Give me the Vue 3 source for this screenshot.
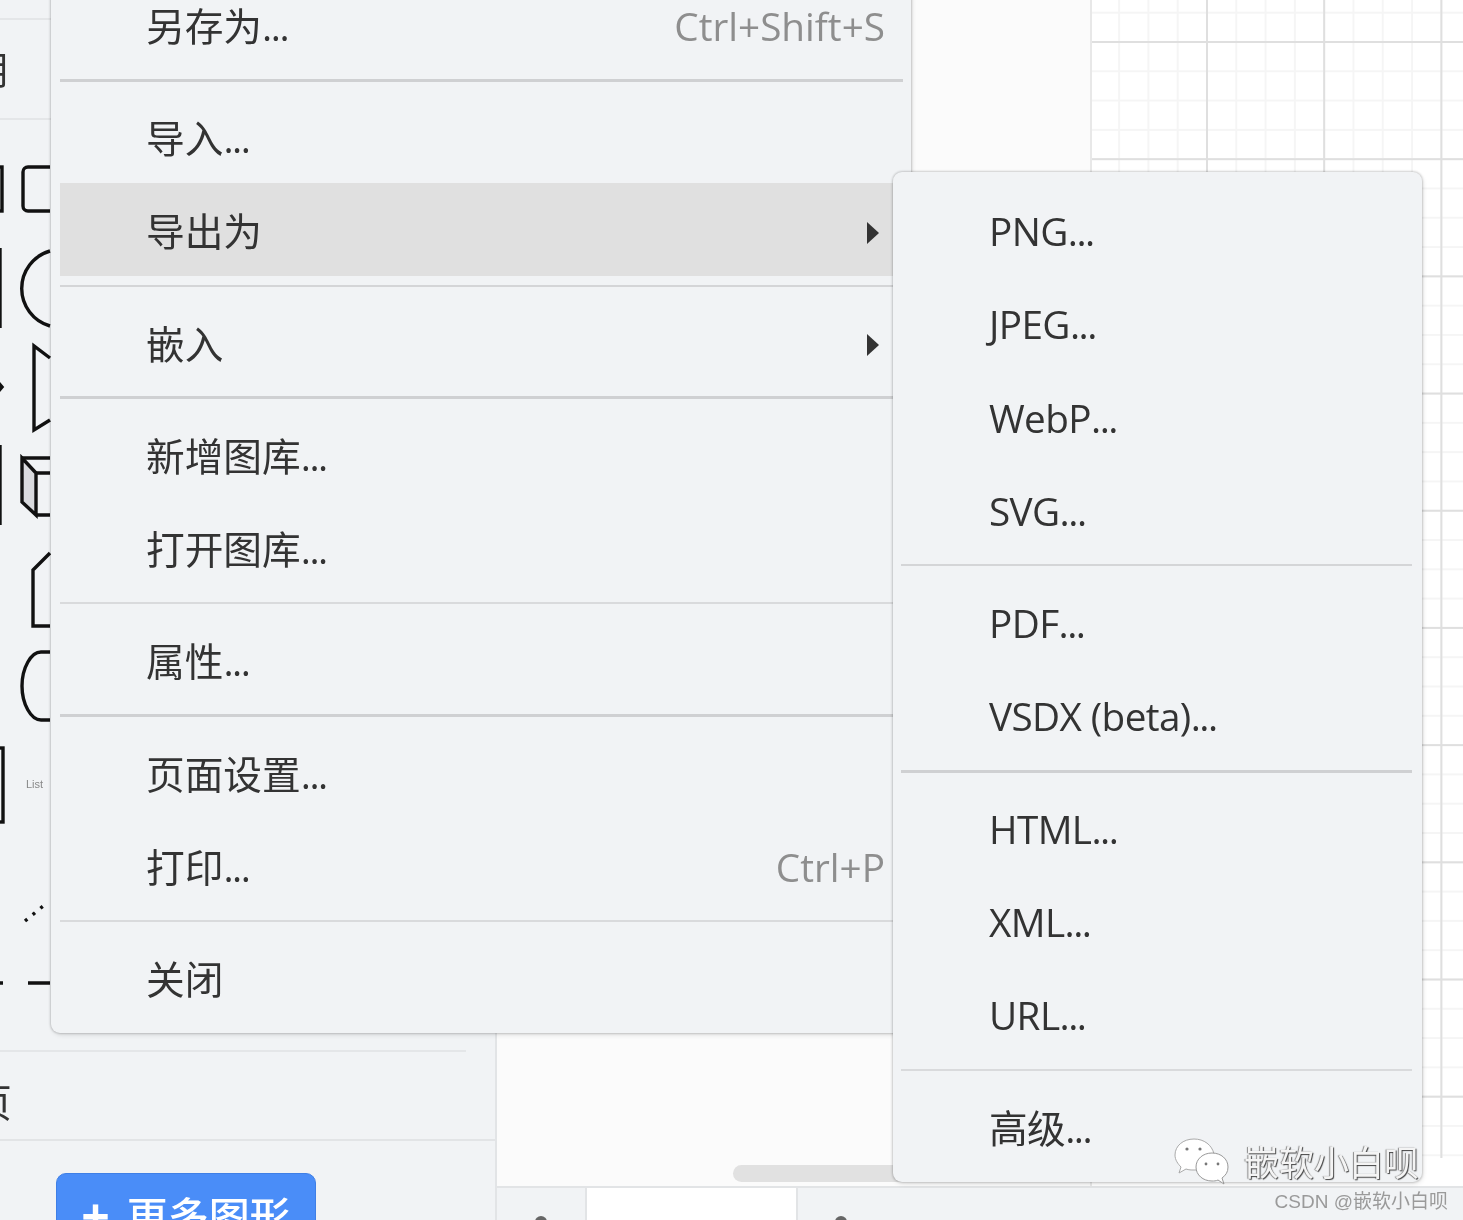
<script setup>
const fileItems = [
  { label: '另存为', dots: true, shortcut: 'Ctrl+Shift+S' },
  { sep: 'thick' },
  { label: '导入', dots: true },
  { label: '导出为', arrow: true, active: true },
  { sep: 'mid' },
  { label: '嵌入', arrow: true },
  { sep: 'thick' },
  { label: '新增图库', dots: true },
  { label: '打开图库', dots: true },
  { sep: 'thin' },
  { label: '属性', dots: true },
  { sep: 'thick' },
  { label: '页面设置', dots: true },
  { label: '打印', dots: true, shortcut: 'Ctrl+P' },
  { sep: 'thin' },
  { label: '关闭' }
]
const exportItems = [
  { label: 'PNG', dots: true },
  { label: 'JPEG', dots: true },
  { label: 'WebP', dots: true },
  { label: 'SVG', dots: true },
  { sep: 'mid' },
  { label: 'PDF', dots: true },
  { label: 'VSDX (beta)', dots: true },
  { sep: 'thick' },
  { label: 'HTML', dots: true },
  { label: 'XML', dots: true },
  { label: 'URL', dots: true },
  { sep: 'thin' },
  { label: '高级', dots: true }
]
</script>

<template>
  <div class="app">
    <aside class="sidebar">
      <div class="side-head"><span class="clipped">通用</span></div>
      <svg class="shapes" width="495" height="930" viewBox="0 120 495 930" fill="none" stroke="#111" stroke-width="3.4">
        <rect x="-20" y="167" width="22" height="44" />
        <path d="M50 167H28a5 5 0 0 0-5 5v34a5 5 0 0 0 5 5h22" />
        <path d="M0 248v80" />
        <path d="M50 251a39 39 0 0 0 0 75" />
        <path d="M-4 380l6 7-6 7" fill="#111" />
        <path d="M50 358l-16-12v84l16-10" />
        <path d="M0 445v80" />
        <path d="M22 458l14 15v42l-14-13z" fill="#d9dade" />
        <path d="M50 458H22M36 473h14M36 515h14" />
        <path d="M50 553L33 570v56h17" />
        <path d="M50 652H41c-10 0-19 16-19 34s9 34 19 34h9" />
        <rect x="-20" y="748" width="23" height="74" />
        <text x="26" y="788" class="list-label" stroke="none">List</text>
        <path d="M25 921l23-19" stroke-dasharray="3 7" />
        <path d="M-6 983h9M28 983h22" />
      </svg>
      <div class="side-rule"></div>
      <div class="side-foot"><span class="clipped page-label">草稿页</span></div>
      <div class="more-wrap">
        <button class="more-btn"><span class="plus">+</span>更多图形</button>
      </div>
    </aside>

    <div class="right">
      <main class="stage">
        <div class="gutter"></div>
        <div class="canvas-col">
          <div class="grid"></div>
        </div>
        <div class="thumb"></div>
      </main>
      <footer class="tabbar">
        <div class="tab-icon"><i></i></div>
        <div class="tab"></div>
        <div class="tab-icon"><i></i></div>
      </footer>
    </div>

    <div class="menu file-menu">
      <template v-for="(item, i) in fileItems" :key="i">
        <div v-if="item.sep" class="sep"><hr :class="item.sep" /></div>
        <div v-else class="row" :class="{ active: item.active }">
          <span>{{ item.label }}<span v-if="item.dots" class="dots">...</span></span>
          <span v-if="item.shortcut" class="shortcut">{{ item.shortcut }}</span>
          <svg v-if="item.arrow" class="arrow" width="14" height="24" viewBox="0 0 14 24"><path d="M1 1l12 11L1 23z" fill="#333" /></svg>
        </div>
      </template>
    </div>

    <div class="menu export-menu">
      <template v-for="(item, i) in exportItems" :key="i">
        <div v-if="item.sep" class="sep"><hr :class="item.sep" /></div>
        <div v-else class="row"><span>{{ item.label }}<span v-if="item.dots" class="dots">...</span></span></div>
      </template>
    </div>

    <div class="watermark">
      <svg width="56" height="48" viewBox="0 0 56 48">
        <path d="M20 1C9 1 1 8 1 17c0 5 3 9 6 12l-2 6 7-4c3 1 5 1 8 1h3c-1-9 6-17 17-16-2-9-10-15-20-15z" fill="#fff" stroke="#aaa" stroke-width="1" />
        <path d="M38 15c-9 0-16 6-16 14s7 14 16 14c2 0 4 0 6-1l6 4-2-6c4-3 6-6 6-11 0-8-7-14-16-14z" fill="#fff" stroke="#999" stroke-width="1" />
        <circle cx="13" cy="11" r="1.6" fill="#777" /><circle cx="26" cy="11" r="1.6" fill="#777" />
        <circle cx="32" cy="26" r="1.4" fill="#777" /><circle cx="44" cy="26" r="1.4" fill="#777" />
      </svg>
      <span class="wm-text">嵌软小白呗</span>
    </div>
    <div class="csdn">CSDN @嵌软小白呗</div>
  </div>
</template>

<style scoped>
.app {
  position: relative;
  width: 1463px;
  height: 1220px;
  overflow: hidden;
  display: flex;
  background: #fbfbfb;
  font-family: "Open Sans", "Noto Sans CJK SC", sans-serif;
  color: #333;
  filter: blur(0.6px);
}
.sidebar {
  flex: 0 0 497px;
  height: 1220px;
  display: flex;
  flex-direction: column;
  background: #f1f3f5;
  border-right: 2px solid #e2e4e6;
  box-sizing: border-box;
  overflow: hidden;
}
.side-head {
  flex: 0 0 102px;
  box-sizing: border-box;
  margin-top: 18px;
  border-top: 2px solid #e4e6e8;
  border-bottom: 2px solid #e4e6e8;
  display: flex;
  align-items: center;
  font-size: 38.7px;
  line-height: 1;
}
.clipped {
  margin-left: -68px;
  white-space: nowrap;
}
.shapes {
  flex: 0 0 930px;
  display: block;
}
.list-label {
  font: 11px "Liberation Sans", sans-serif;
  fill: #888;
}
.side-rule {
  flex: 0 0 2px;
  width: 466px;
  background: #e4e6e8;
}
.side-foot {
  flex: 0 0 89px;
  box-sizing: border-box;
  padding-top: 8px;
  border-bottom: 2px solid #e2e4e6;
  display: flex;
  align-items: center;
  font-size: 38.7px;
}
.page-label {
  margin-left: -104px;
}
.more-wrap {
  flex: none;
  padding: 32px 0 0 56px;
}
.more-btn {
  width: 260px;
  height: 90px;
  border: 1px solid #3f7fe6;
  border-radius: 10px;
  background: #4a8df8;
  color: #fff;
  font: 500 41px "Open Sans", "Noto Sans CJK SC", sans-serif;
  padding: 14px 0 0;
  display: flex;
  justify-content: center;
  gap: 17px;
  line-height: 56px;
}
.plus {
  font-weight: 700;
  font-size: 50px;
}
.right {
  flex: 1;
  display: flex;
  flex-direction: column;
  min-width: 0;
}
.stage {
  position: relative;
  flex: 0 0 1186px;
  display: flex;
}
.gutter {
  flex: 0 0 595px;
  border-right: 2px solid #e8e8e8;
  box-sizing: border-box;
}
.canvas-col {
  flex: 1;
  background: #fff;
}
.grid {
  height: 1158px;
  background-color: #fff;
  background-image:
    linear-gradient(to right, #dfdfdf 2px, transparent 2px),
    linear-gradient(to bottom, #dfdfdf 2px, transparent 2px),
    linear-gradient(to right, #f5f5f5 2px, transparent 2px),
    linear-gradient(to bottom, #f5f5f5 2px, transparent 2px);
  background-size: 117.2px 117.2px, 117.2px 117.2px, 29.3px 29.3px, 29.3px 29.3px;
  background-position: 114px 0, 0 41px, 114px 0, 0 41px;
}
.thumb {
  position: absolute;
  left: 236px;
  top: 1165px;
  width: 220px;
  height: 17px;
  border-radius: 9px;
  background: #e1e1e1;
}
.tabbar {
  flex: 1;
  display: flex;
  background: #f1f3f5;
  border-top: 2px solid #e2e4e6;
  overflow: hidden;
}
.tab-icon {
  flex: 0 0 88px;
  display: flex;
  justify-content: center;
  padding-top: 28px;
  border-right: 2px solid #e2e4e6;
}
.tab-icon:last-child {
  flex: 0 0 86px;
  border-right: 0;
}
.tab-icon i {
  width: 12px;
  height: 12px;
  border-radius: 50%;
  background: #666;
}
.tab {
  flex: 0 0 209px;
  background: #fff;
  border-right: 2px solid #e2e4e6;
}
.menu {
  position: absolute;
  box-sizing: border-box;
  padding: 9.5px 9px;
  background: #f1f3f5;
  border-radius: 9px;
  box-shadow: 0 0 2px 1px rgba(0, 0, 0, 0.16), 1px 2px 5px rgba(0, 0, 0, 0.1);
  font-size: 38.7px;
}
.file-menu {
  left: 51px;
  top: -31.8px;
  width: 860px;
  padding-right: 8px;
}
.export-menu {
  left: 893px;
  top: 172px;
  width: 529px;
  padding: 11px 10px 9.5px 8px;
}
.row {
  height: 93.2px;
  box-sizing: border-box;
  padding: 4px 18px 0 86px;
  display: flex;
  align-items: center;
  justify-content: space-between;
  line-height: 1;
  white-space: nowrap;
}
.file-menu .row {
  height: 93px;
  padding-top: 4.5px;
}
.export-menu .row {
  padding-left: 88px;
  letter-spacing: -0.6px;
}
.row.active {
  background: #e0e0e0;
}
.dots {
  letter-spacing: -1.5px;
}
.shortcut {
  color: #8e8e8e;
}
.arrow {
  margin-right: 5px;
  margin-top: 2px;
}
.sep {
  height: 19.3px;
  display: flex;
  align-items: center;
}
.sep hr {
  width: 100%;
  margin: 0;
  border: 0;
  background: #d4d5d7;
}
.sep hr.thick { height: 3px; background: #cfd0d2; }
.sep hr.mid { height: 2px; }
.sep hr.thin { height: 2px; background: #d9dadc; }
.watermark {
  position: absolute;
  left: 1174px;
  top: 1138px;
  display: flex;
  align-items: center;
  gap: 14px;
}
.wm-text {
  font-size: 35px;
  line-height: 1;
  color: #f4f4f4;
  text-shadow: 1px 1px 1px #444, -1px 0 1px #888;
  white-space: nowrap;
}
.csdn {
  position: absolute;
  right: 15px;
  top: 1190px;
  font: 19px/24px "Liberation Sans", "Noto Sans CJK SC", sans-serif;
  color: #9a9a9a;
  white-space: nowrap;
}
</style>
